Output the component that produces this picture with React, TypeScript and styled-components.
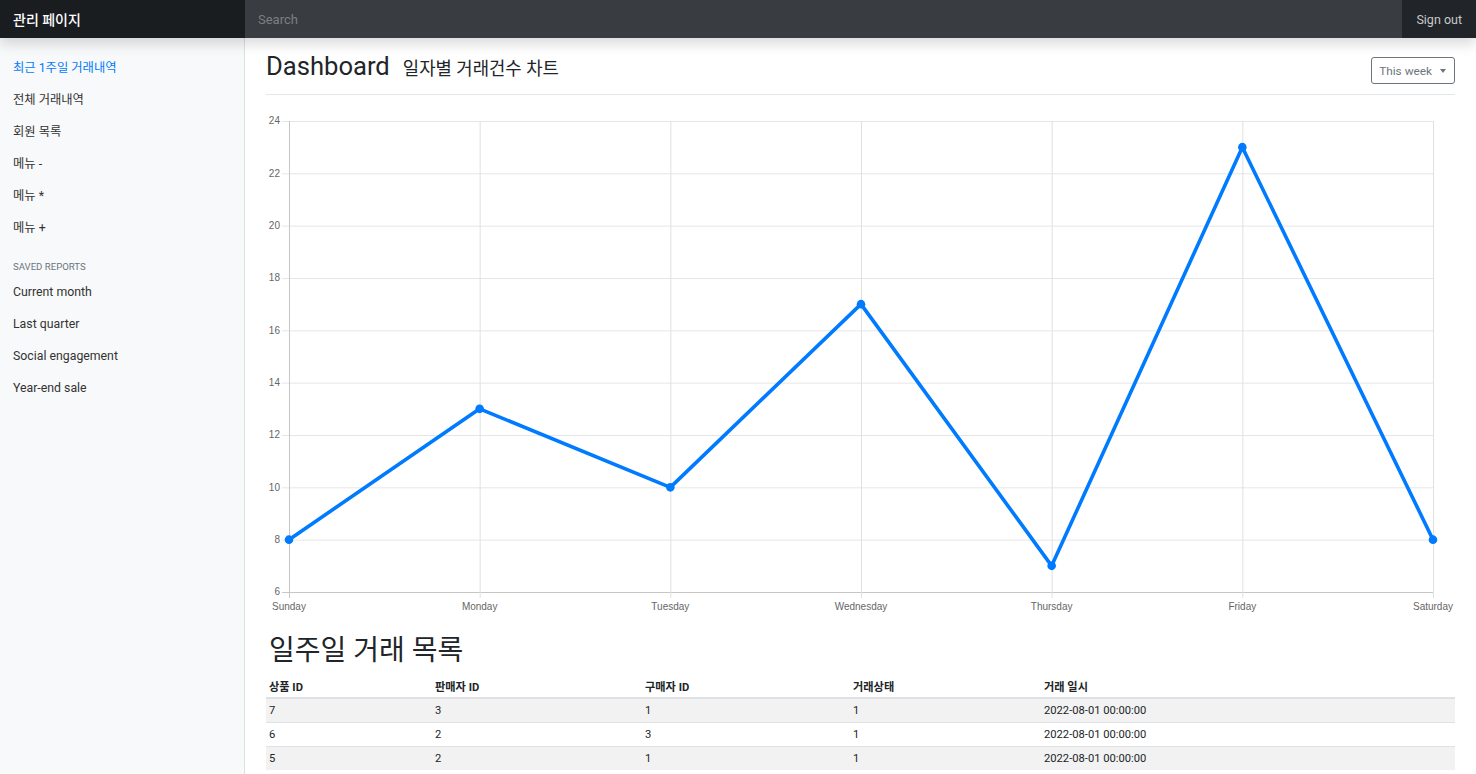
import React from "react";
import styled, { createGlobalStyle } from "styled-components";

const FONT = `Roboto, "Noto Sans CJK KR", sans-serif`;

const GlobalStyle = createGlobalStyle`
  html, body {
    margin: 0;
    padding: 0;
    height: 100%;
    overflow: hidden;
    background: #fff;
  }
  body {
    font-family: ${FONT};
    color: #212529;
  }
  * { box-sizing: border-box; }
`;

const Page = styled.div`
  display: flex;
  flex-direction: column;
  height: 100vh;
`;

const Navbar = styled.header`
  position: relative;
  z-index: 2;
  display: flex;
  align-items: stretch;
  height: 38px;
  flex-shrink: 0;
  background: #212529;
  box-shadow: 0 6px 13px rgba(0, 0, 0, 0.15);
`;

const Brand = styled.div`
  width: 245px;
  flex-shrink: 0;
  display: flex;
  align-items: center;
  padding: 0 13px;
  background: #1a1d20;
  color: #fff;
  font-size: 14px;
  font-weight: 500;
`;

const Search = styled.input`
  flex: 1;
  border: 0;
  outline: none;
  padding: 0 13px;
  background: #393c41;
  color: #fff;
  font-family: ${FONT};
  font-size: 13px;
  &::placeholder { color: #7b7f84; }
`;

const SignOut = styled.a`
  display: flex;
  align-items: center;
  padding: 0 14px 0 14px;
  color: #c8c9ca;
  font-size: 12.5px;
  text-decoration: none;
  white-space: nowrap;
`;

const Body = styled.div`
  flex: 1;
  display: flex;
  min-height: 0;
`;

const Sidebar = styled.nav`
  width: 245px;
  flex-shrink: 0;
  background: #f8f9fa;
  box-shadow: inset -1px 0 0 rgba(0, 0, 0, 0.1);
  padding-top: 13px;
  display: flex;
  flex-direction: column;
`;

const NavLink = styled.a<{ $active?: boolean }>`
  display: flex;
  align-items: center;
  height: 32px;
  padding: 0 13px;
  font-size: 12.3px;
  color: ${(p) => (p.$active ? "#007bff" : "#333")};
  text-decoration: none;
  white-space: nowrap;
`;

const SidebarHeading = styled.h6`
  margin: 17px 0 2px;
  padding: 0 13px;
  height: 14px;
  line-height: 14px;
  font-size: 9.6px;
  font-weight: 400;
  text-transform: uppercase;
  color: #6c757d;
`;

const Main = styled.main`
  flex: 1;
  min-width: 0;
  padding: 0 21px;
  overflow: hidden;
`;

const Header = styled.div`
  display: flex;
  justify-content: space-between;
  align-items: flex-end;
  padding: 12px 0 9px;
  border-bottom: 1px solid #e4e6e8;
`;

const Title = styled.h1`
  margin: 0;
  display: flex;
  align-items: baseline;
  gap: 13px;
  font-size: 25.6px;
  font-weight: 400;
  line-height: 33px;
  color: #212529;
`;

const Subtitle = styled.small`
  font-size: 17.8px;
  font-weight: 400;
  color: #212529;
`;

const DropButton = styled.button`
  display: flex;
  align-items: center;
  gap: 8px;
  height: 27px;
  margin-bottom: 1px;
  padding: 0 8px 0 7px;
  border: 1px solid #6c757d;
  border-radius: 3px;
  background: #fff;
  color: #6c757d;
  font-family: ${FONT};
  font-size: 11.8px;
`;

const Caret = styled.span`
  width: 0;
  height: 0;
  border-left: 3.5px solid transparent;
  border-right: 3.5px solid transparent;
  border-top: 4px solid #6c757d;
`;

const ChartWrap = styled.div`
  margin-top: 13px;
  height: 508px;
`;

const SectionTitle = styled.h2`
  margin: 18px 0 7px 3px;
  font-size: 28px;
  font-weight: 400;
  line-height: 34px;
  color: #212529;
`;

const Table = styled.table`
  width: 100%;
  border-collapse: collapse;
  font-size: 11.2px;
  color: #212529;
  table-layout: fixed;
`;

const Th = styled.th`
  text-align: left;
  font-weight: 700;
  height: 23px;
  padding: 0 3px;
  border-bottom: 2px solid #dee2e6;
  vertical-align: middle;
`;

const Tr = styled.tr<{ $striped?: boolean }>`
  background: ${(p) => (p.$striped ? "#f2f2f2" : "#fff")};
`;

const Td = styled.td`
  height: 24px;
  padding: 0 3px;
  border-top: 1px solid #dee2e6;
  vertical-align: middle;
`;

const days = ["Sunday", "Monday", "Tuesday", "Wednesday", "Thursday", "Friday", "Saturday"];
const values = [8, 13, 10, 17, 7, 23, 8];

const X0 = 23;
const XSTEP = 190.83;
const YTOP = 13;
const YBOT = 484;
const yOf = (v: number) => YBOT - ((v - 6) / 18) * (YBOT - YTOP);
const xOf = (i: number) => X0 + i * XSTEP;

function Chart() {
  const ticks = [6, 8, 10, 12, 14, 16, 18, 20, 22, 24];
  const pts = values.map((v, i) => `${xOf(i)},${yOf(v)}`).join(" ");
  return (
    <svg width="100%" height="508" viewBox="0 0 1190 508" preserveAspectRatio="none">
      {ticks.map((t) => (
        <g key={t}>
          <line x1={16} x2={1168} y1={yOf(t) + 0.5} y2={yOf(t) + 0.5} stroke={t === 6 ? "#c6c6c6" : "#e6e6e6"} strokeWidth={1} />
          <text
            x={14}
            y={yOf(t) + 3.5}
            textAnchor="end"
            fontFamily="'Liberation Sans', Arial, sans-serif"
            fontSize="10"
            fill="#666"
          >
            {t}
          </text>
        </g>
      ))}
      {days.map((d, i) => (
        <g key={d}>
          <line
            x1={xOf(i) + 0.5}
            x2={xOf(i) + 0.5}
            y1={YTOP}
            y2={YBOT + 6}
            stroke={i === 0 ? "#c6c6c6" : "#e0e0e0"}
            strokeWidth={1}
          />
          <text
            x={xOf(i)}
            y={502}
            textAnchor="middle"
            fontFamily="'Liberation Sans', Arial, sans-serif"
            fontSize="10"
            fill="#666"
          >
            {d}
          </text>
        </g>
      ))}
      <polyline points={pts} fill="none" stroke="#007bff" strokeWidth={3.6} strokeLinejoin="round" strokeLinecap="round" />
      {values.map((v, i) => (
        <circle key={i} cx={xOf(i)} cy={yOf(v)} r={4.3} fill="#007bff" />
      ))}
    </svg>
  );
}

const navItems = [
  { label: "최근 1주일 거래내역", active: true },
  { label: "전체 거래내역" },
  { label: "회원 목록" },
  { label: "메뉴 -" },
  { label: "메뉴 *" },
  { label: "메뉴 +" },
];

const reports = ["Current month", "Last quarter", "Social engagement", "Year-end sale"];

const rows = [
  ["7", "3", "1", "1", "2022-08-01 00:00:00"],
  ["6", "2", "3", "1", "2022-08-01 00:00:00"],
  ["5", "2", "1", "1", "2022-08-01 00:00:00"],
];

export default function App() {
  return (
    <Page>
      <GlobalStyle />
      <Navbar>
        <Brand>관리 페이지</Brand>
        <Search placeholder="Search" aria-label="Search" />
        <SignOut href="#">Sign out</SignOut>
      </Navbar>
      <Body>
        <Sidebar>
          {navItems.map((n) => (
            <NavLink key={n.label} href="#" $active={n.active}>
              {n.label}
            </NavLink>
          ))}
          <SidebarHeading>Saved reports</SidebarHeading>
          {reports.map((r) => (
            <NavLink key={r} href="#">
              {r}
            </NavLink>
          ))}
        </Sidebar>
        <Main>
          <Header>
            <Title>
              Dashboard <Subtitle>일자별 거래건수 차트</Subtitle>
            </Title>
            <DropButton>
              This week <Caret />
            </DropButton>
          </Header>
          <ChartWrap>
            <Chart />
          </ChartWrap>
          <SectionTitle>일주일 거래 목록</SectionTitle>
          <Table>
            <colgroup>
              <col style={{ width: 166 }} />
              <col style={{ width: 210 }} />
              <col style={{ width: 208 }} />
              <col style={{ width: 191 }} />
              <col />
            </colgroup>
            <thead>
              <tr>
                <Th>상품 ID</Th>
                <Th>판매자 ID</Th>
                <Th>구매자 ID</Th>
                <Th>거래상태</Th>
                <Th>거래 일시</Th>
              </tr>
            </thead>
            <tbody>
              {rows.map((r, i) => (
                <Tr key={i} $striped={i % 2 === 0}>
                  {r.map((c, j) => (
                    <Td key={j}>{c}</Td>
                  ))}
                </Tr>
              ))}
            </tbody>
          </Table>
        </Main>
      </Body>
    </Page>
  );
}
